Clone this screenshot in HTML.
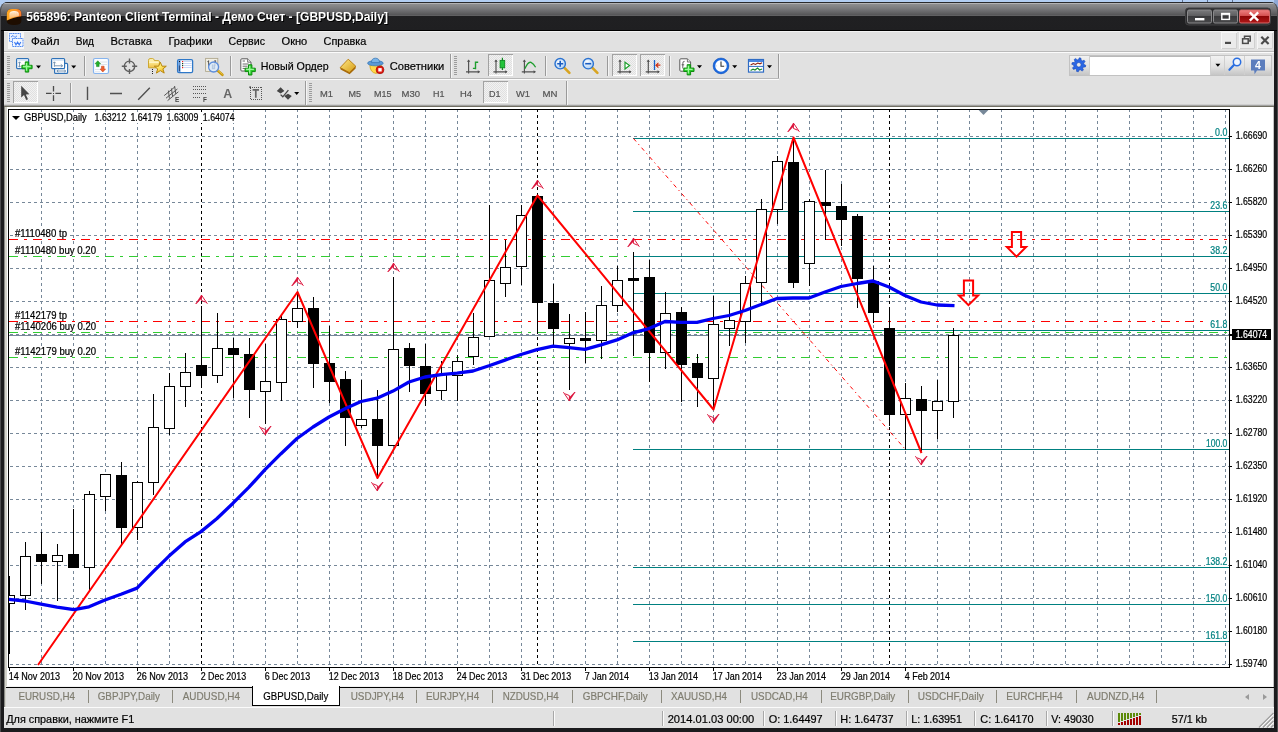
<!DOCTYPE html><html lang="ru"><head><meta charset="utf-8"><title>565896: Panteon Client Terminal</title>
<style>
html,body{margin:0;padding:0}
body{width:1278px;height:732px;overflow:hidden;position:relative;background:#b2cdf2;font-family:"Liberation Sans",sans-serif;font-size:11px;color:#000}
div{position:absolute;box-sizing:border-box}
#win{left:0;top:2px;width:1278px;height:730px;background:#1b1b1d;border-radius:8px 8px 0 0;overflow:hidden;border-left:1px solid #4c4c4e;border-right:1px solid #4c4c4e}
#title{left:-1px;top:0;width:1278px;height:29px;background:linear-gradient(#2a2a2c 0px,#2a2a2c 1px,#b2b2b4 1px,#b2b2b4 2px,#8e8e90 2px,#77777a 7px,#58585a 12.5px,#646466 13px,#5c5c5e 14px,#202022 14px,#1f1f21 28px,#000 28px,#000 29px)}
#client{left:4px;top:31px;width:1270px;height:697px;background:#e1e1e1}
.hl{left:0;width:1270px;height:1px}
svg{will-change:transform}
</style></head><body>
<div style="left:1182px;top:0;width:1px;height:3px;background:#5f6f8c"></div>
<div style="left:1207px;top:0;width:1px;height:3px;background:#5f6f8c"></div>
<div style="left:1232px;top:0;width:1px;height:3px;background:#5f6f8c"></div>
<div style="left:1274px;top:0;width:4px;height:8px;background:#8fa9d6"></div>
<div id="win"><div id="title"></div></div>
<div id="client">
<div class="hl" style="top:0px;background:#f3f3f3"></div>
<div class="hl" style="top:20px;background:#b9b9b9"></div>
<div class="hl" style="top:21px;background:#fbfbfb"></div>
<div style="left:0;top:47px;width:775px;height:1px;background:#b9b9b9"></div><div style="left:0;top:48px;width:775px;height:1px;background:#fbfbfb"></div>
<div class="hl" style="top:73px;background:#cfcfcf"></div>
<div class="hl" style="top:74px;background:#a2a2a0"></div>
<div class="hl" style="top:75px;background:#706e62"></div>
<div style="left:0;top:76px;width:1270px;height:580px;background:#fff"></div>
<div style="left:0;top:76px;width:1px;height:600px;background:#8a8a86"></div><div style="left:1px;top:76px;width:2px;height:600px;background:#d2d2ca"></div>
<div style="left:1269px;top:76px;width:1px;height:600px;background:#c4c4c4"></div>
<div style="left:2px;top:655px;width:1266px;height:1px;background:#f2f2f2"></div><div style="left:2px;top:656px;width:1268px;height:1px;background:#000"></div>
<div style="left:2px;top:657px;width:1266px;height:19px;background:#e1e1e1"></div>
<div style="left:84px;top:659px;width:1px;height:13px;background:#8c8a7e"></div>
<div style="left:168px;top:659px;width:1px;height:13px;background:#8c8a7e"></div>
<div style="left:412px;top:659px;width:1px;height:13px;background:#8c8a7e"></div>
<div style="left:488px;top:659px;width:1px;height:13px;background:#8c8a7e"></div>
<div style="left:568px;top:659px;width:1px;height:13px;background:#8c8a7e"></div>
<div style="left:657px;top:659px;width:1px;height:13px;background:#8c8a7e"></div>
<div style="left:736px;top:659px;width:1px;height:13px;background:#8c8a7e"></div>
<div style="left:817px;top:659px;width:1px;height:13px;background:#8c8a7e"></div>
<div style="left:904px;top:659px;width:1px;height:13px;background:#8c8a7e"></div>
<div style="left:992px;top:659px;width:1px;height:13px;background:#8c8a7e"></div>
<div style="left:1072px;top:659px;width:1px;height:13px;background:#8c8a7e"></div>
<div style="left:1152px;top:659px;width:1px;height:13px;background:#8c8a7e"></div>
<div style="left:248px;top:655px;width:88px;height:20px;background:#fff;border:1px solid #000;border-top:none"></div>
<div style="left:1241px;top:663px;width:0;height:0;border:3.5px solid transparent;border-right:4px solid #9a9a9a;border-left:none"></div>
<div style="left:1259px;top:663px;width:0;height:0;border:3.5px solid transparent;border-left:4px solid #9a9a9a;border-right:none"></div>
<div class="hl" style="top:676px;background:#fbfbfb"></div>
<div style="left:549px;top:680px;width:2px;height:15px;background:#a8a8a8;border-right:1px solid #fbfbfb"></div>
<div style="left:658px;top:680px;width:2px;height:15px;background:#a8a8a8;border-right:1px solid #fbfbfb"></div>
<div style="left:759px;top:680px;width:2px;height:15px;background:#a8a8a8;border-right:1px solid #fbfbfb"></div>
<div style="left:831px;top:680px;width:2px;height:15px;background:#a8a8a8;border-right:1px solid #fbfbfb"></div>
<div style="left:902px;top:680px;width:2px;height:15px;background:#a8a8a8;border-right:1px solid #fbfbfb"></div>
<div style="left:970px;top:680px;width:2px;height:15px;background:#a8a8a8;border-right:1px solid #fbfbfb"></div>
<div style="left:1042px;top:680px;width:2px;height:15px;background:#a8a8a8;border-right:1px solid #fbfbfb"></div>
<div style="left:1108px;top:680px;width:2px;height:15px;background:#a8a8a8;border-right:1px solid #fbfbfb"></div>
</div>
<svg class="chart" width="1278" height="732" viewBox="0 0 1278 732" style="position:absolute;left:0;top:0" shape-rendering="crispEdges" text-rendering="optimizeLegibility">
<defs><clipPath id="cp"><rect x="9" y="110" width="1220" height="557"/></clipPath></defs>
<g clip-path="url(#cp)">
<path d="M41.5 109V667M73.5 109V667M105.5 109V667M137.5 109V667M169.5 109V667M201.5 109V667M233.5 109V667M265.5 109V667M297.5 109V667M329.5 109V667M361.5 109V667M393.5 109V667M425.5 109V667M457.5 109V667M489.5 109V667M521.5 109V667M553.5 109V667M585.5 109V667M617.5 109V667M649.5 109V667M681.5 109V667M713.5 109V667M745.5 109V667M777.5 109V667M809.5 109V667M841.5 109V667M873.5 109V667M905.5 109V667M937.5 109V667M969.5 109V667M1001.5 109V667M1033.5 109V667M1065.5 109V667M1097.5 109V667M1129.5 109V667M1161.5 109V667M1193.5 109V667M1225.5 109V667" stroke="#778899" stroke-width="1" stroke-dasharray="3 3" fill="none"/>
<path d="M4 136.5H1229M4 169.5H1229M4 202.5H1229M4 235.5H1229M4 268.5H1229M4 301.5H1229M4 334.5H1229M4 367.5H1229M4 400.5H1229M4 433.5H1229M4 466.5H1229M4 499.5H1229M4 532.5H1229M4 565.5H1229M4 598.5H1229M4 631.5H1229M4 664.5H1229" stroke="#778899" stroke-width="1" stroke-dasharray="3 3" fill="none"/>
<path d="M201.5 109V667" stroke="#000" stroke-width="1" stroke-dasharray="3 3" fill="none"/>
<path d="M537.5 109V667" stroke="#000" stroke-width="1" stroke-dasharray="3 3" fill="none"/>
<path d="M889.5 109V667" stroke="#000" stroke-width="1" stroke-dasharray="3 3" fill="none"/>
<path d="M9 239.5H1229" stroke="#ff0000" stroke-width="1" stroke-dasharray="9 6 3 6" fill="none"/>
<path d="M9 256.5H1229" stroke="#32cd32" stroke-width="1" stroke-dasharray="9 6 3 6" fill="none"/>
<path d="M9 321.5H1229" stroke="#ff0000" stroke-width="1" stroke-dasharray="9 6 3 6" fill="none"/>
<path d="M9 332.5H1229" stroke="#32cd32" stroke-width="1" stroke-dasharray="9 6 3 6" fill="none"/>
<path d="M9 357.5H1229" stroke="#32cd32" stroke-width="1" stroke-dasharray="9 6 3 6" fill="none"/>
<path d="M9 335.5H1229" stroke="#778899" stroke-width="1" fill="none"/>
<path d="M633 138.5H1229" stroke="#008080" stroke-width="1" fill="none"/>
<path d="M633 211.5H1229" stroke="#008080" stroke-width="1" fill="none"/>
<path d="M633 256.5H1229" stroke="#008080" stroke-width="1" fill="none"/>
<path d="M633 293.5H1229" stroke="#008080" stroke-width="1" fill="none"/>
<path d="M633 330.5H1229" stroke="#008080" stroke-width="1" fill="none"/>
<path d="M633 449.5H1229" stroke="#008080" stroke-width="1" fill="none"/>
<path d="M633 567.5H1229" stroke="#008080" stroke-width="1" fill="none"/>
<path d="M633 604.5H1229" stroke="#008080" stroke-width="1" fill="none"/>
<path d="M633 641.5H1229" stroke="#008080" stroke-width="1" fill="none"/>
<path d="M633.5 138.5L905.5 449.5" stroke="#ff0000" stroke-width="1" stroke-dasharray="4 3.5 1.2 3.5" fill="none" shape-rendering="auto"/>
<path d="M9.5 576V654M25.5 542V610M41.5 532V584M57.5 544V601M73.5 509V568M89.5 491V590M105.5 474V511M121.5 462V544M137.5 481V540M153.5 394V495M169.5 373V435M185.5 353V407M201.5 306V388M217.5 313V383M233.5 338V398M249.5 338V418M265.5 344V424M281.5 315V401M297.5 292V328M313.5 297V388M329.5 326V403M345.5 371V446M361.5 380V428M377.5 390V478M393.5 277V446M409.5 343V392M425.5 344V406M441.5 361V400M457.5 355V401M473.5 313V365M489.5 205V337M505.5 240V297M521.5 205V285M537.5 195V334M553.5 284V347M569.5 314V390M585.5 312V363M601.5 286V359M617.5 266V312M633.5 252V356M649.5 260V382M665.5 292V369M681.5 307V402M697.5 354V407M713.5 296V410M729.5 301V346M745.5 276V343M761.5 199V303M777.5 156V224M793.5 137V288M809.5 199V286M825.5 170V240M841.5 184V246M857.5 214V308M873.5 266V323M889.5 307V426M905.5 383V450M921.5 386V451M937.5 380V439M953.5 328V418" stroke="#000" stroke-width="1" fill="none"/>
<rect x="4.5" y="595.5" width="10" height="8" fill="#fff" stroke="#000" stroke-width="1"/>
<rect x="20.5" y="556.5" width="10" height="39" fill="#fff" stroke="#000" stroke-width="1"/>
<rect x="36" y="554" width="11" height="8" fill="#000"/>
<rect x="52.5" y="555.5" width="10" height="6" fill="#fff" stroke="#000" stroke-width="1"/>
<rect x="68" y="554" width="11" height="14" fill="#000"/>
<rect x="84.5" y="494.5" width="10" height="73" fill="#fff" stroke="#000" stroke-width="1"/>
<rect x="100.5" y="474.5" width="10" height="22" fill="#fff" stroke="#000" stroke-width="1"/>
<rect x="116" y="475" width="11" height="53" fill="#000"/>
<rect x="132.5" y="482.5" width="10" height="45" fill="#fff" stroke="#000" stroke-width="1"/>
<rect x="148.5" y="427.5" width="10" height="55" fill="#fff" stroke="#000" stroke-width="1"/>
<rect x="164.5" y="386.5" width="10" height="42" fill="#fff" stroke="#000" stroke-width="1"/>
<rect x="180.5" y="372.5" width="10" height="14" fill="#fff" stroke="#000" stroke-width="1"/>
<rect x="196" y="365" width="11" height="11" fill="#000"/>
<rect x="212.5" y="348.5" width="10" height="27" fill="#fff" stroke="#000" stroke-width="1"/>
<rect x="228" y="348" width="11" height="7" fill="#000"/>
<rect x="244" y="354" width="11" height="36" fill="#000"/>
<rect x="260.5" y="381.5" width="10" height="10" fill="#fff" stroke="#000" stroke-width="1"/>
<rect x="276.5" y="319.5" width="10" height="63" fill="#fff" stroke="#000" stroke-width="1"/>
<rect x="292.5" y="308.5" width="10" height="13" fill="#fff" stroke="#000" stroke-width="1"/>
<rect x="308" y="308" width="11" height="56" fill="#000"/>
<rect x="324" y="363" width="11" height="19" fill="#000"/>
<rect x="340" y="379" width="11" height="39" fill="#000"/>
<rect x="356.5" y="419.5" width="10" height="6" fill="#fff" stroke="#000" stroke-width="1"/>
<rect x="372" y="419" width="11" height="27" fill="#000"/>
<rect x="388.5" y="349.5" width="10" height="96" fill="#fff" stroke="#000" stroke-width="1"/>
<rect x="404" y="348" width="11" height="18" fill="#000"/>
<rect x="420" y="366" width="11" height="28" fill="#000"/>
<rect x="436.5" y="374.5" width="10" height="16" fill="#fff" stroke="#000" stroke-width="1"/>
<rect x="452.5" y="361.5" width="10" height="14" fill="#fff" stroke="#000" stroke-width="1"/>
<rect x="468.5" y="337.5" width="10" height="19" fill="#fff" stroke="#000" stroke-width="1"/>
<rect x="484.5" y="280.5" width="10" height="56" fill="#fff" stroke="#000" stroke-width="1"/>
<rect x="500.5" y="267.5" width="10" height="16" fill="#fff" stroke="#000" stroke-width="1"/>
<rect x="516.5" y="215.5" width="10" height="51" fill="#fff" stroke="#000" stroke-width="1"/>
<rect x="532" y="196" width="11" height="107" fill="#000"/>
<rect x="548" y="303" width="11" height="26" fill="#000"/>
<rect x="564.5" y="338.5" width="10" height="5" fill="#fff" stroke="#000" stroke-width="1"/>
<rect x="580" y="338" width="11" height="3" fill="#000"/>
<rect x="596.5" y="305.5" width="10" height="35" fill="#fff" stroke="#000" stroke-width="1"/>
<rect x="612.5" y="280.5" width="10" height="25" fill="#fff" stroke="#000" stroke-width="1"/>
<rect x="628" y="278" width="11" height="3" fill="#000"/>
<rect x="644" y="277" width="11" height="76" fill="#000"/>
<rect x="660.5" y="313.5" width="10" height="39" fill="#fff" stroke="#000" stroke-width="1"/>
<rect x="676" y="312" width="11" height="53" fill="#000"/>
<rect x="692" y="363" width="11" height="15" fill="#000"/>
<rect x="708.5" y="324.5" width="10" height="54" fill="#fff" stroke="#000" stroke-width="1"/>
<rect x="724.5" y="320.5" width="10" height="8" fill="#fff" stroke="#000" stroke-width="1"/>
<rect x="740.5" y="283.5" width="10" height="38" fill="#fff" stroke="#000" stroke-width="1"/>
<rect x="756.5" y="209.5" width="10" height="73" fill="#fff" stroke="#000" stroke-width="1"/>
<rect x="772.5" y="161.5" width="10" height="48" fill="#fff" stroke="#000" stroke-width="1"/>
<rect x="788" y="162" width="11" height="121" fill="#000"/>
<rect x="804.5" y="201.5" width="10" height="62" fill="#fff" stroke="#000" stroke-width="1"/>
<rect x="820" y="202" width="11" height="4" fill="#000"/>
<rect x="836" y="206" width="11" height="14" fill="#000"/>
<rect x="852" y="216" width="11" height="63" fill="#000"/>
<rect x="868" y="281" width="11" height="32" fill="#000"/>
<rect x="884" y="328" width="11" height="87" fill="#000"/>
<rect x="900.5" y="398.5" width="10" height="16" fill="#fff" stroke="#000" stroke-width="1"/>
<rect x="916" y="399" width="11" height="12" fill="#000"/>
<rect x="932.5" y="401.5" width="10" height="9" fill="#fff" stroke="#000" stroke-width="1"/>
<rect x="948.5" y="335.5" width="10" height="66" fill="#fff" stroke="#000" stroke-width="1"/>
<polyline points="38,665 297.5,292 377.5,478 537.5,195.5 713.5,409.5 793.5,137.5 921.5,453" stroke="#ff0000" stroke-width="2" fill="none" shape-rendering="auto" stroke-linejoin="round"/>
<polyline points="8,599.3 25,601 41,604.2 57,607.2 74,609.6 89,606.8 105,600 121,594.3 137,588.1 153,571.8 169,556.1 185,541.9 201,531.6 217,518.5 233,503.2 249,487.2 265,469.6 281,453.7 297,438.5 313,427 329,417 345,408.7 361,401.5 377,398.2 393,391.1 409,382 425,377 441,374.6 457,373.2 473,371 489,365.8 505,360.1 521,354.5 537,349.7 553,346.2 569,347.6 585,349.3 601,344.8 617,339.9 633,332.8 649,328.6 665,321.5 681,322.3 697,322.3 713,318.5 729,315.5 745,310.5 761,304.5 777,298.5 793,298 809,298 825,292 841,286.5 857,283.5 873,281 889,287 905,295.5 921,302 937,305 954.5,305.6" stroke="#0000f4" stroke-width="3.3" fill="none" shape-rendering="auto" stroke-linejoin="round"/>
<path d="M201.4 294.7L195.2 304L196.4 304L201.4 298.8Z" fill="#dc143c" shape-rendering="auto"/><path d="M201.4 295L207.4 303.8M201.4 300.4L205.6 302.2M201.4 295V300.4" stroke="#dc143c" stroke-width="1" fill="none" shape-rendering="auto"/>
<path d="M297.4 276.7L291.2 286L292.4 286L297.4 280.8Z" fill="#dc143c" shape-rendering="auto"/><path d="M297.4 277L303.4 285.8M297.4 282.4L301.6 284.2M297.4 277V282.4" stroke="#dc143c" stroke-width="1" fill="none" shape-rendering="auto"/>
<path d="M393.4 262.7L387.2 272L388.4 272L393.4 266.8Z" fill="#dc143c" shape-rendering="auto"/><path d="M393.4 263L399.4 271.8M393.4 268.4L397.6 270.2M393.4 263V268.4" stroke="#dc143c" stroke-width="1" fill="none" shape-rendering="auto"/>
<path d="M537.4 179.7L531.2 189L532.4 189L537.4 183.8Z" fill="#dc143c" shape-rendering="auto"/><path d="M537.4 180L543.4 188.8M537.4 185.4L541.6 187.2M537.4 180V185.4" stroke="#dc143c" stroke-width="1" fill="none" shape-rendering="auto"/>
<path d="M633.4 237.7L627.2 247L628.4 247L633.4 241.8Z" fill="#dc143c" shape-rendering="auto"/><path d="M633.4 238L639.4 246.8M633.4 243.4L637.6 245.2M633.4 238V243.4" stroke="#dc143c" stroke-width="1" fill="none" shape-rendering="auto"/>
<path d="M793.4 122.7L787.2 132L788.4 132L793.4 126.8Z" fill="#dc143c" shape-rendering="auto"/><path d="M793.4 123L799.4 131.8M793.4 128.4L797.6 130.2M793.4 123V128.4" stroke="#dc143c" stroke-width="1" fill="none" shape-rendering="auto"/>
<path d="M265.4 435.3L271.6 426L270.4 426L265.4 431.2Z" fill="#dc143c" shape-rendering="auto"/><path d="M265.4 435L259.4 426.2M265.4 429.6L261.2 427.8M265.4 435V429.6" stroke="#dc143c" stroke-width="1" fill="none" shape-rendering="auto"/>
<path d="M377.4 491.3L383.6 482L382.4 482L377.4 487.2Z" fill="#dc143c" shape-rendering="auto"/><path d="M377.4 491L371.4 482.2M377.4 485.6L373.2 483.8M377.4 491V485.6" stroke="#dc143c" stroke-width="1" fill="none" shape-rendering="auto"/>
<path d="M569.4 401.3L575.6 392L574.4 392L569.4 397.2Z" fill="#dc143c" shape-rendering="auto"/><path d="M569.4 401L563.4 392.2M569.4 395.6L565.2 393.8M569.4 401V395.6" stroke="#dc143c" stroke-width="1" fill="none" shape-rendering="auto"/>
<path d="M713.4 423.3L719.6 414L718.4 414L713.4 419.2Z" fill="#dc143c" shape-rendering="auto"/><path d="M713.4 423L707.4 414.2M713.4 417.6L709.2 415.8M713.4 423V417.6" stroke="#dc143c" stroke-width="1" fill="none" shape-rendering="auto"/>
<path d="M921.4 465.3L927.6 456L926.4 456L921.4 461.2Z" fill="#dc143c" shape-rendering="auto"/><path d="M921.4 465L915.4 456.2M921.4 459.6L917.2 457.8M921.4 465V459.6" stroke="#dc143c" stroke-width="1" fill="none" shape-rendering="auto"/>
<path d="M1011.9 232H1021.1V247H1026.1L1016.5 256.6L1006.9 247H1011.9Z" stroke="#ff0000" stroke-width="2" fill="none" shape-rendering="auto" stroke-linejoin="miter"/>
<path d="M963.9 280.5H973.1V295.5H978.1L968.5 305.1L958.9 295.5H963.9Z" stroke="#ff0000" stroke-width="2" fill="none" shape-rendering="auto" stroke-linejoin="miter"/>
</g>
<path d="M8.5 109V667.5H1230M8 109.5H1230M1229.5 109V668" stroke="#000" stroke-width="1" fill="none"/>
<path d="M978.6 110H988.4L983.5 115Z" fill="#778899" shape-rendering="auto"/>
<path d="M1230 136.5H1232M1230 169.5H1232M1230 202.5H1232M1230 235.5H1232M1230 268.5H1232M1230 301.5H1232M1230 334.5H1232M1230 367.5H1232M1230 400.5H1232M1230 433.5H1232M1230 466.5H1232M1230 499.5H1232M1230 532.5H1232M1230 565.5H1232M1230 598.5H1232M1230 631.5H1232M1230 664.5H1232M9.5 668V671M73.5 668V671M137.5 668V671M201.5 668V671M265.5 668V671M329.5 668V671M393.5 668V671M457.5 668V671M521.5 668V671M585.5 668V671M649.5 668V671M713.5 668V671M777.5 668V671M841.5 668V671M905.5 668V671" stroke="#000" stroke-width="1" fill="none"/>
<g font-family="'Liberation Sans', sans-serif" shape-rendering="auto" stroke-width=".22" paint-order="stroke">
<text x="1235.7" y="139" font-size="10" fill="#000" stroke="#000" textLength="31.5" lengthAdjust="spacingAndGlyphs">1.66690</text>
<text x="1235.7" y="172" font-size="10" fill="#000" stroke="#000" textLength="31.5" lengthAdjust="spacingAndGlyphs">1.66260</text>
<text x="1235.7" y="205" font-size="10" fill="#000" stroke="#000" textLength="31.5" lengthAdjust="spacingAndGlyphs">1.65820</text>
<text x="1235.7" y="238" font-size="10" fill="#000" stroke="#000" textLength="31.5" lengthAdjust="spacingAndGlyphs">1.65390</text>
<text x="1235.7" y="271" font-size="10" fill="#000" stroke="#000" textLength="31.5" lengthAdjust="spacingAndGlyphs">1.64950</text>
<text x="1235.7" y="304" font-size="10" fill="#000" stroke="#000" textLength="31.5" lengthAdjust="spacingAndGlyphs">1.64520</text>
<text x="1235.7" y="370" font-size="10" fill="#000" stroke="#000" textLength="31.5" lengthAdjust="spacingAndGlyphs">1.63650</text>
<text x="1235.7" y="403" font-size="10" fill="#000" stroke="#000" textLength="31.5" lengthAdjust="spacingAndGlyphs">1.63220</text>
<text x="1235.7" y="436" font-size="10" fill="#000" stroke="#000" textLength="31.5" lengthAdjust="spacingAndGlyphs">1.62780</text>
<text x="1235.7" y="469" font-size="10" fill="#000" stroke="#000" textLength="31.5" lengthAdjust="spacingAndGlyphs">1.62350</text>
<text x="1235.7" y="502" font-size="10" fill="#000" stroke="#000" textLength="31.5" lengthAdjust="spacingAndGlyphs">1.61920</text>
<text x="1235.7" y="535" font-size="10" fill="#000" stroke="#000" textLength="31.5" lengthAdjust="spacingAndGlyphs">1.61480</text>
<text x="1235.7" y="568" font-size="10" fill="#000" stroke="#000" textLength="31.5" lengthAdjust="spacingAndGlyphs">1.61040</text>
<text x="1235.7" y="601" font-size="10" fill="#000" stroke="#000" textLength="31.5" lengthAdjust="spacingAndGlyphs">1.60610</text>
<text x="1235.7" y="634" font-size="10" fill="#000" stroke="#000" textLength="31.5" lengthAdjust="spacingAndGlyphs">1.60180</text>
<text x="1235.7" y="667" font-size="10" fill="#000" stroke="#000" textLength="31.5" lengthAdjust="spacingAndGlyphs">1.59740</text>
<text x="8.7" y="680.1" font-size="10" fill="#000" stroke="#000" textLength="51.4" lengthAdjust="spacingAndGlyphs">14 Nov 2013</text>
<text x="72.7" y="680.1" font-size="10" fill="#000" stroke="#000" textLength="51.4" lengthAdjust="spacingAndGlyphs">20 Nov 2013</text>
<text x="136.7" y="680.1" font-size="10" fill="#000" stroke="#000" textLength="51.4" lengthAdjust="spacingAndGlyphs">26 Nov 2013</text>
<text x="200.7" y="680.1" font-size="10" fill="#000" stroke="#000" textLength="45.4" lengthAdjust="spacingAndGlyphs">2 Dec 2013</text>
<text x="264.7" y="680.1" font-size="10" fill="#000" stroke="#000" textLength="45.4" lengthAdjust="spacingAndGlyphs">6 Dec 2013</text>
<text x="328.7" y="680.1" font-size="10" fill="#000" stroke="#000" textLength="50.4" lengthAdjust="spacingAndGlyphs">12 Dec 2013</text>
<text x="392.7" y="680.1" font-size="10" fill="#000" stroke="#000" textLength="50.4" lengthAdjust="spacingAndGlyphs">18 Dec 2013</text>
<text x="456.7" y="680.1" font-size="10" fill="#000" stroke="#000" textLength="50.4" lengthAdjust="spacingAndGlyphs">24 Dec 2013</text>
<text x="520.7" y="680.1" font-size="10" fill="#000" stroke="#000" textLength="50.4" lengthAdjust="spacingAndGlyphs">31 Dec 2013</text>
<text x="584.7" y="680.1" font-size="10" fill="#000" stroke="#000" textLength="44.4" lengthAdjust="spacingAndGlyphs">7 Jan 2014</text>
<text x="648.7" y="680.1" font-size="10" fill="#000" stroke="#000" textLength="49.4" lengthAdjust="spacingAndGlyphs">13 Jan 2014</text>
<text x="712.7" y="680.1" font-size="10" fill="#000" stroke="#000" textLength="49.4" lengthAdjust="spacingAndGlyphs">17 Jan 2014</text>
<text x="776.7" y="680.1" font-size="10" fill="#000" stroke="#000" textLength="49.4" lengthAdjust="spacingAndGlyphs">23 Jan 2014</text>
<text x="840.7" y="680.1" font-size="10" fill="#000" stroke="#000" textLength="49.4" lengthAdjust="spacingAndGlyphs">29 Jan 2014</text>
<text x="904.7" y="680.1" font-size="10" fill="#000" stroke="#000" textLength="45.4" lengthAdjust="spacingAndGlyphs">4 Feb 2014</text>
<rect x="1232" y="329" width="39" height="11" fill="#000" shape-rendering="crispEdges"/><rect x="1230" y="335" width="2" height="1" fill="#000" shape-rendering="crispEdges"/>
<text x="1235.7" y="338" font-size="10" fill="#fff" stroke="#fff" textLength="31.5" lengthAdjust="spacingAndGlyphs">1.64074</text>
<rect x="10" y="113" width="226" height="10" fill="#fff"/>
<text x="24" y="121" font-size="10" fill="#000" stroke="#000" textLength="62.8" lengthAdjust="spacingAndGlyphs">GBPUSD,Daily</text>
<text x="94.6" y="121" font-size="10" fill="#000" stroke="#000" textLength="31.8" lengthAdjust="spacingAndGlyphs">1.63212</text>
<text x="130.4" y="121" font-size="10" fill="#000" stroke="#000" textLength="31.8" lengthAdjust="spacingAndGlyphs">1.64179</text>
<text x="166.6" y="121" font-size="10" fill="#000" stroke="#000" textLength="31.8" lengthAdjust="spacingAndGlyphs">1.63009</text>
<text x="202.8" y="121" font-size="10" fill="#000" stroke="#000" textLength="31.8" lengthAdjust="spacingAndGlyphs">1.64074</text>
<path d="M12 116H20L16 120Z" fill="#000"/>
<rect x="14" y="229" width="55" height="10" fill="#fff" shape-rendering="crispEdges"/>
<text x="15" y="237" font-size="10" fill="#000" stroke="#000" textLength="52" lengthAdjust="spacingAndGlyphs">#1110480 tp</text>
<rect x="14" y="246" width="84" height="10" fill="#fff" shape-rendering="crispEdges"/>
<text x="15" y="254" font-size="10" fill="#000" stroke="#000" textLength="81" lengthAdjust="spacingAndGlyphs">#1110480 buy 0.20</text>
<rect x="14" y="311" width="55" height="10" fill="#fff" shape-rendering="crispEdges"/>
<text x="15" y="319" font-size="10" fill="#000" stroke="#000" textLength="52" lengthAdjust="spacingAndGlyphs">#1142179 tp</text>
<rect x="14" y="322" width="84" height="10" fill="#fff" shape-rendering="crispEdges"/>
<text x="15" y="330" font-size="10" fill="#000" stroke="#000" textLength="81" lengthAdjust="spacingAndGlyphs">#1140206 buy 0.20</text>
<rect x="14" y="347" width="84" height="10" fill="#fff" shape-rendering="crispEdges"/>
<text x="15" y="355" font-size="10" fill="#000" stroke="#000" textLength="81" lengthAdjust="spacingAndGlyphs">#1142179 buy 0.20</text>
<rect x="1214.0" y="128" width="14.3" height="10" fill="#fff" shape-rendering="crispEdges"/>
<text x="1215.0" y="136" font-size="10" fill="#008080" stroke="#008080" textLength="12.3" lengthAdjust="spacingAndGlyphs">0.0</text>
<rect x="1209.3" y="201" width="19.0" height="10" fill="#fff" shape-rendering="crispEdges"/>
<text x="1210.3" y="209" font-size="10" fill="#008080" stroke="#008080" textLength="17.0" lengthAdjust="spacingAndGlyphs">23.6</text>
<rect x="1209.3" y="246" width="19.0" height="10" fill="#fff" shape-rendering="crispEdges"/>
<text x="1210.3" y="254" font-size="10" fill="#008080" stroke="#008080" textLength="17.0" lengthAdjust="spacingAndGlyphs">38.2</text>
<rect x="1209.3" y="283" width="19.0" height="10" fill="#fff" shape-rendering="crispEdges"/>
<text x="1210.3" y="291" font-size="10" fill="#008080" stroke="#008080" textLength="17.0" lengthAdjust="spacingAndGlyphs">50.0</text>
<rect x="1209.3" y="320" width="19.0" height="10" fill="#fff" shape-rendering="crispEdges"/>
<text x="1210.3" y="328" font-size="10" fill="#008080" stroke="#008080" textLength="17.0" lengthAdjust="spacingAndGlyphs">61.8</text>
<rect x="1204.9" y="439" width="23.4" height="10" fill="#fff" shape-rendering="crispEdges"/>
<text x="1205.8999999999999" y="447" font-size="10" fill="#008080" stroke="#008080" textLength="21.4" lengthAdjust="spacingAndGlyphs">100.0</text>
<rect x="1204.7" y="557" width="23.6" height="10" fill="#fff" shape-rendering="crispEdges"/>
<text x="1205.7" y="565" font-size="10" fill="#008080" stroke="#008080" textLength="21.6" lengthAdjust="spacingAndGlyphs">138.2</text>
<rect x="1204.7" y="594" width="23.6" height="10" fill="#fff" shape-rendering="crispEdges"/>
<text x="1205.7" y="602" font-size="10" fill="#008080" stroke="#008080" textLength="21.6" lengthAdjust="spacingAndGlyphs">150.0</text>
<rect x="1204.7" y="631" width="23.6" height="10" fill="#fff" shape-rendering="crispEdges"/>
<text x="1205.7" y="639" font-size="10" fill="#008080" stroke="#008080" textLength="21.6" lengthAdjust="spacingAndGlyphs">161.8</text>
</g>
</svg>
<svg width="1278" height="732" viewBox="0 0 1278 732" style="position:absolute;left:0;top:0;will-change:transform">
<defs><pattern id="hat" width="2" height="2" patternUnits="userSpaceOnUse"><rect width="2" height="2" fill="#f2f2f2"/><rect width="1" height="1" fill="#e0e0e0"/><rect x="1" y="1" width="1" height="1" fill="#e0e0e0"/></pattern><linearGradient id="gb" x1="0" y1="0" x2="0" y2="1"><stop offset="0" stop-color="#7a7a7c"/><stop offset=".5" stop-color="#5a5a5c"/><stop offset=".5" stop-color="#3a3a3c"/><stop offset="1" stop-color="#48484a"/></linearGradient><linearGradient id="gr" x1="0" y1="0" x2="0" y2="1"><stop offset="0" stop-color="#f08080"/><stop offset=".5" stop-color="#d04a4a"/><stop offset=".5" stop-color="#8e0606"/><stop offset="1" stop-color="#b01818"/></linearGradient><linearGradient id="gs" x1="0" y1="0" x2="0" y2="1"><stop offset="0" stop-color="#f2f2f2"/><stop offset=".55" stop-color="#e2e2e2"/><stop offset="1" stop-color="#c4c4c4"/></linearGradient><linearGradient id="go" x1="0" y1="0" x2="1" y2="0"><stop offset="0" stop-color="#ffa820"/><stop offset=".6" stop-color="#ff9a28"/><stop offset="1" stop-color="#f87830"/></linearGradient><linearGradient id="gy" x1="0" y1="0" x2="1" y2="1"><stop offset="0" stop-color="#ffe98a"/><stop offset="1" stop-color="#d49a10"/></linearGradient><radialGradient id="gl" cx=".4" cy=".35" r=".7"><stop offset="0" stop-color="#ffffff"/><stop offset="1" stop-color="#a8cdf4"/></radialGradient><linearGradient id="gw" x1="0" y1="0" x2="0" y2="1"><stop offset="0" stop-color="#ffffff" stop-opacity=".95"/><stop offset="1" stop-color="#ffd0a0" stop-opacity=".55"/></linearGradient><linearGradient id="gf" x1="0" y1="0" x2="0" y2="1"><stop offset="0" stop-color="#fff6c4"/><stop offset=".45" stop-color="#fbe68a"/><stop offset="1" stop-color="#eebf48"/></linearGradient><linearGradient id="gst" x1="0" y1="0" x2=".6" y2="1"><stop offset="0" stop-color="#fffbc0"/><stop offset=".55" stop-color="#ffe668"/><stop offset="1" stop-color="#eeb828"/></linearGradient></defs>
<path d="M6.8 14Q6.8 9 12 9H16.4Q21.4 9 21.4 14V21Q21.4 25 14 25Q6.8 25 6.8 21Z" fill="#1e0d00"/>
<path d="M6.8 20.6V14Q6.8 9 12 9H16.4Q21.4 9 21.4 14V16.2Q12.5 17.4 6.8 20.6Z" fill="url(#go)"/>
<path d="M9.4 18.4V13.8Q9.4 10.9 14 10.9Q18.9 10.9 18.9 13.8V16Q13.4 16.6 9.4 18.4Z" fill="url(#gw)"/>
<path d="M11.2 17.5V13M13 16.9V12.4M14.8 16.6V12.3M16.6 16.3V12.5" stroke="#ffc890" stroke-width=".7" opacity=".7"/>
<rect x="1185.5" y="8" width="85" height="17" rx="3" fill="#2c2c2e" stroke="#404042" stroke-width="1"/>
<rect x="1187.5" y="10" width="24" height="13" rx="1.5" fill="url(#gb)" stroke="#8a8a8c" stroke-width="1"/>
<rect x="1213.5" y="10" width="24" height="13" rx="1.5" fill="url(#gb)" stroke="#8a8a8c" stroke-width="1"/>
<rect x="1239.5" y="10" width="30" height="13" rx="1.5" fill="url(#gr)" stroke="#d46a6a" stroke-width="1"/>
<rect x="1195" y="18" width="9.4" height="2.4" fill="#fff"/>
<rect x="1221.8" y="14" width="7.6" height="5.4" fill="none" stroke="#fff" stroke-width="1.4"/><rect x="1221.1" y="12.8" width="9" height="1.8" fill="#fff"/>
<path d="M1249.8 12.4L1258.2 20.6M1258.2 12.4L1249.8 20.6" stroke="#fff" stroke-width="2.3"/>
<rect x="8" y="32" width="16" height="17" fill="#f6f6f6"/>
<rect x="9.5" y="33.5" width="11" height="8" fill="#eaf1ff" stroke="#4a86f0" stroke-width="1" stroke-dasharray="1.2 .5"/>
<rect x="12.5" y="38.5" width="10.5" height="8" fill="#f4f8ff" stroke="#4a86f0" stroke-width="1" stroke-dasharray="1.2 .5"/>
<path d="M11 37L13 35.5L15 37.5L17 35.8" stroke="#4a86f0" stroke-width="1" fill="none"/>
<path d="M14.5 42L16 44.8L17.6 42L19.2 44.8L20.8 42" stroke="#3a78f0" stroke-width="1.1" fill="none"/>
<rect x="1221.5" y="32.5" width="15" height="16" fill="#ebebeb" stroke="#f6f6f6" stroke-width="1"/><path d="M1236.5 33V48.5H1222" stroke="#cfcfcf" stroke-width="1" fill="none"/>
<rect x="1239.5" y="32.5" width="15" height="16" fill="#ebebeb" stroke="#f6f6f6" stroke-width="1"/><path d="M1254.5 33V48.5H1240" stroke="#cfcfcf" stroke-width="1" fill="none"/>
<rect x="1257.5" y="32.5" width="15" height="16" fill="#ebebeb" stroke="#f6f6f6" stroke-width="1"/><path d="M1272.5 33V48.5H1258" stroke="#cfcfcf" stroke-width="1" fill="none"/>
<rect x="1225" y="41.8" width="6" height="2.2" fill="#4a4a4a"/>
<path d="M1244.5 38V36.2H1250.2V41H1248.6" stroke="#4a4a4a" stroke-width="1.5" fill="none"/><rect x="1242.6" y="38.8" width="5.6" height="4.6" fill="none" stroke="#4a4a4a" stroke-width="1.5"/>
<path d="M1261.3 36.8L1268.6 44M1268.6 36.8L1261.3 44" stroke="#4a4a4a" stroke-width="2.2"/>
<path d="M7 56.5h3M7 58.5h3M7 60.5h3M7 62.5h3M7 64.5h3M7 66.5h3M7 68.5h3M7 70.5h3M7 72.5h3M7 74.5h3" stroke="#9c9c9c" stroke-width="1" shape-rendering="crispEdges"/>
<rect x="16.6" y="58.6" width="12" height="10" rx="1" fill="#fff" stroke="#2f72b8" stroke-width="1.2"/><rect x="17.2" y="59.2" width="10.8" height="1.6" fill="#cfe1f5"/>
<path d="M19.5 62V67M18.3 63.2L19.5 61.8L20.7 63.2M18.3 65.8L19.5 67.2L20.7 65.8" stroke="#6d8cab" stroke-width=".9" fill="none"/>
<path d="M25.3 61.9H28.7V65.3H32.1V68.7H28.7V72.1H25.3V68.7H21.9V65.3H25.3Z" fill="#2ccc2c" stroke="#0e8c0e" stroke-width="1" stroke-linejoin="round"/><path d="M26.5 62.9V70.69999999999999M22.9 66.5H30.700000000000003" stroke="#9cf89c" stroke-width="1.3"/>
<path d="M36 65.4H41L38.5 68.4Z" fill="#000"/>
<rect x="54.6" y="63.4" width="13" height="10" rx="1" fill="#fff" stroke="#2f72b8" stroke-width="1.2"/>
<rect x="51.6" y="58.6" width="13" height="10" rx="1" fill="#fff" stroke="#2f72b8" stroke-width="1.2"/><rect x="52.2" y="59.2" width="11.8" height="1.6" fill="#cfe1f5"/>
<path d="M54.4 62V66.8M54.4 65.8H62.5M60.8 64.4L62.7 65.8L60.8 67.2M53.2 63.2L54.4 61.8L55.6 63.2M57 71H65.6M58.4 69.8L56.8 71L58.4 72.2M64.2 69.8L65.8 71L64.2 72.2" stroke="#6d8cab" stroke-width=".9" fill="none"/>
<path d="M71.2 65.4H76.2L73.7 68.4Z" fill="#000"/>
<path d="M84.5 56V76" stroke="#9a9a9a" stroke-width="1" shape-rendering="crispEdges"/><path d="M85.5 56V76" stroke="#f4f4f4" stroke-width="1" shape-rendering="crispEdges"/>
<rect x="93.5" y="58.5" width="15" height="15" rx="1.5" fill="#fbfdff" stroke="#86b4ee" stroke-width="1.2"/>
<path d="M100 62H107M100 64.5H107M95 69.5H100M95 71.8H100" stroke="#d8dde6" stroke-width=".8"/>
<path d="M97.8 60.8L100.6 63.8H99.1V66.6H96.5V63.8H95Z" fill="#22b02a" stroke="#11801a" stroke-width=".5"/>
<path d="M102.8 72L100 69H101.5V66.2H104.1V69H105.6Z" fill="#f06030" stroke="#c23a10" stroke-width=".5"/>
<circle cx="129.5" cy="66.3" r="5.2" fill="none" stroke="#5e5e5e" stroke-width="1.4"/><path d="M129.5 58.6V63.6M129.5 69V74M121.8 66.3H126.8M132.2 66.3H137.2" stroke="#5e5e5e" stroke-width="1.4"/>
<path d="M148.5 60.4Q148.5 58.6 150 58.6H152.8Q153.8 58.6 154.2 60L154.4 60.6H158.2Q159.4 60.6 159.4 62V67.8H148.5Z" fill="url(#gf)" stroke="#c8a224" stroke-width=".9"/>
<path d="M149.2 62.2H158.8" stroke="#fffbe0" stroke-width="1"/>
<rect x="152" y="69" width="1" height="1" fill="#222"/><rect x="152" y="71" width="1" height="1" fill="#222"/><rect x="152" y="73" width="1" height="1" fill="#222"/>
<path d="M160.3 62.2L162 66.2H166.3L162.9 68.9L164.2 73.1L160.3 70.6L156.4 73.1L157.7 68.9L154.3 66.2H158.6Z" fill="url(#gst)" stroke="#b8860b" stroke-width="1" stroke-linejoin="round"/>
<rect x="177.6" y="59.6" width="15" height="13" rx="1.4" fill="#fff" stroke="#2f78c8" stroke-width="1.3"/><rect x="178.3" y="60.3" width="2.2" height="11.6" fill="#5a92d8"/><rect x="178.9" y="65.5" width="1" height="5.6" fill="#2a4a7a"/><rect x="179" y="61" width="1" height="1" fill="#111"/>
<path d="M183.6 61.5H191.6M183.6 63.5H191.6M183.6 65.5H191.6M183.6 67.5H191.6" stroke="#c4d4f6" stroke-width=".9"/>
<rect x="182" y="61" width="1.2" height="1.2" fill="#f02020"/><rect x="182" y="63" width="1.2" height="1.2" fill="#204020"/><rect x="182" y="65" width="1.2" height="1.2" fill="#204020"/><rect x="182" y="67" width="1.2" height="1.2" fill="#f02020"/>
<rect x="205.6" y="58.4" width="12.2" height="13" fill="#f2efe4" stroke="#b0a88e" stroke-width=".9"/><path d="M208.6 60.4V66.6M207.4 61.6H208.6M208.6 64.8H209.8M215 60V66M215 61.2H216.2M213.8 64H215" stroke="#4a4a4a" stroke-width=".9"/>
<path d="M217.6 70.6L222.4 74.8" stroke="#c8980c" stroke-width="2.6" stroke-linecap="round"/><path d="M217.8 70.2L222.4 74.2" stroke="#f0cc50" stroke-width=".8" stroke-linecap="round"/>
<circle cx="213.6" cy="67" r="5" fill="#dcebfb" fill-opacity=".82" stroke="#5e8edc" stroke-width="1.3"/><path d="M212.4 64.6V68.6H214.6V64.6" stroke="#b4c8e0" stroke-width="1.1" fill="#c8d8ea"/>
<path d="M230.5 56V76" stroke="#9a9a9a" stroke-width="1" shape-rendering="crispEdges"/><path d="M231.5 56V76" stroke="#f4f4f4" stroke-width="1" shape-rendering="crispEdges"/>
<path d="M241.8 58.8H247.6L251 62.2V70Q251 71 250 71H241.8Q240.8 71 240.8 70V59.8Q240.8 58.8 241.8 58.8Z" fill="#fff" stroke="#5a5a5a" stroke-width="1"/><path d="M247.6 58.8V62.2H251" fill="#e8e8e8" stroke="#5a5a5a" stroke-width=".8"/><path d="M242.6 61H245M242.6 64H248.6M242.6 66.2H247.6M242.6 68.4H245" stroke="#6a6a6a" stroke-width="1"/>
<path d="M248.5 64.80000000000001H251.89999999999998V68.2H255.29999999999998V71.60000000000001H251.89999999999998V75.0H248.5V71.60000000000001H245.1V68.2H248.5Z" fill="#2ccc2c" stroke="#0e8c0e" stroke-width="1" stroke-linejoin="round"/><path d="M249.7 65.80000000000001V73.6M246.1 69.4H253.89999999999998" stroke="#9cf89c" stroke-width="1.3"/>
<path d="M340.2 67.6L348.2 59.2L355.8 66.2L349.4 72.6Z" fill="url(#gy)" stroke="#b87a0a" stroke-width=".9"/><path d="M340.2 67.6L349.4 72.6L355.8 66.2L355.6 68.4L349.6 74.2L340.6 69.6Z" fill="#a86a08"/>
<path d="M369.8 64.6Q370 72.6 376 73.4Q381 72.6 381.4 64.6Z" fill="#ffd84a" stroke="#d4a010" stroke-width=".8"/>
<ellipse cx="375.4" cy="63.2" rx="7.8" ry="2.6" fill="#5b9ad8" stroke="#3a78b8" stroke-width=".8"/><path d="M371.4 62.6Q371.6 58.2 375.4 58.2Q379.4 58.2 379.6 62.6Z" fill="#7ab4e8" stroke="#3a78b8" stroke-width=".8"/>
<circle cx="380" cy="69.8" r="3.9" fill="#e01a10" stroke="#a00a04" stroke-width=".7"/><rect x="378.3" y="68.1" width="3.4" height="3.4" fill="#fff"/>
<path d="M450.5 54V78" stroke="#9a9a9a" stroke-width="1" shape-rendering="crispEdges"/><path d="M451.5 54V78" stroke="#f4f4f4" stroke-width="1" shape-rendering="crispEdges"/>
<path d="M454 56.5h3M454 58.5h3M454 60.5h3M454 62.5h3M454 64.5h3M454 66.5h3M454 68.5h3M454 70.5h3M454 72.5h3M454 74.5h3" stroke="#9c9c9c" stroke-width="1" shape-rendering="crispEdges"/>
<path d="M468.6 60.2V73.6M466.0 71.8H479.40000000000003" stroke="#505050" stroke-width="1.15" fill="none"/><path d="M466.90000000000003 61.800000000000004L468.6 59.6L470.3 61.800000000000004ZM477.8 70.2L480.1 71.8L477.8 73.39999999999999Z" fill="#505050"/>
<path d="M475.5 61.5V69.2M475.5 62.2H478.2M472.9 68.4H475.5" stroke="#1e9e2e" stroke-width="1.4" fill="none"/>
<rect x="488" y="54" width="25" height="22" fill="url(#hat)"/><path d="M488.5 76V54.5H513" stroke="#a2a2a2" stroke-width="1" fill="none" shape-rendering="crispEdges"/><path d="M512.5 55V75.5H489" stroke="#fff" stroke-width="1" fill="none" shape-rendering="crispEdges"/>
<path d="M496 60.2V73.6M493.4 71.8H506.8" stroke="#505050" stroke-width="1.15" fill="none"/><path d="M494.3 61.800000000000004L496 59.6L497.7 61.800000000000004ZM505.2 70.2L507.5 71.8L505.2 73.39999999999999Z" fill="#505050"/>
<path d="M502.4 57.8V70" stroke="#0f8a20" stroke-width="1.2"/><rect x="500.1" y="60.4" width="4.6" height="7.4" fill="#22c43a" stroke="#0f8a20" stroke-width=".9"/>
<path d="M524.4 60.2V73.6M521.8 71.8H535.2" stroke="#505050" stroke-width="1.15" fill="none"/><path d="M522.6999999999999 61.800000000000004L524.4 59.6L526.1 61.800000000000004ZM533.6 70.2L535.9 71.8L533.6 73.39999999999999Z" fill="#505050"/>
<path d="M524.8 68.8Q528.2 61.2 531 62.4Q533.6 63.6 535.6 67.2" stroke="#1e9e2e" stroke-width="1.3" fill="none"/>
<path d="M545.5 56V76" stroke="#9a9a9a" stroke-width="1" shape-rendering="crispEdges"/><path d="M546.5 56V76" stroke="#f4f4f4" stroke-width="1" shape-rendering="crispEdges"/>
<path d="M564.2 67.6L569.4000000000001 72.8" stroke="#d8a420" stroke-width="2.6" stroke-linecap="round"/>
<circle cx="560.2" cy="63.7" r="5.2" fill="url(#gl)" stroke="#2a72d0" stroke-width="1.4"/>
<path d="M557.2 63.7H563.2M560.2 60.7V66.7" stroke="#1a5cc0" stroke-width="1.6"/>
<path d="M592.2 67.6L597.4000000000001 72.8" stroke="#d8a420" stroke-width="2.6" stroke-linecap="round"/>
<circle cx="588.2" cy="63.7" r="5.2" fill="url(#gl)" stroke="#2a72d0" stroke-width="1.4"/>
<path d="M585.2 63.7H591.2" stroke="#1a5cc0" stroke-width="1.6"/>
<path d="M607.5 56V76" stroke="#9a9a9a" stroke-width="1" shape-rendering="crispEdges"/><path d="M608.5 56V76" stroke="#f4f4f4" stroke-width="1" shape-rendering="crispEdges"/>
<rect x="612" y="54" width="25" height="22" fill="url(#hat)"/><path d="M612.5 76V54.5H637" stroke="#a2a2a2" stroke-width="1" fill="none" shape-rendering="crispEdges"/><path d="M636.5 55V75.5H613" stroke="#fff" stroke-width="1" fill="none" shape-rendering="crispEdges"/>
<path d="M620 60.2V73.6M617.4 71.8H630.8000000000001" stroke="#505050" stroke-width="1.15" fill="none"/><path d="M618.3 61.800000000000004L620 59.6L621.7 61.800000000000004ZM629.2 70.2L631.5 71.8L629.2 73.39999999999999Z" fill="#505050"/>
<path d="M625 62.2L629.6 65.6L625 69Z" fill="#fff" stroke="#1ea02e" stroke-width="1.2"/>
<rect x="640" y="54" width="25" height="22" fill="url(#hat)"/><path d="M640.5 76V54.5H665" stroke="#a2a2a2" stroke-width="1" fill="none" shape-rendering="crispEdges"/><path d="M664.5 55V75.5H641" stroke="#fff" stroke-width="1" fill="none" shape-rendering="crispEdges"/>
<path d="M648.3 60.2V73.6M645.6999999999999 71.8H659.1" stroke="#505050" stroke-width="1.15" fill="none"/><path d="M646.5999999999999 61.800000000000004L648.3 59.6L650.0 61.800000000000004ZM657.5 70.2L659.8 71.8L657.5 73.39999999999999Z" fill="#505050"/>
<path d="M654.5 60V70" stroke="#1a62c8" stroke-width="1.3"/><path d="M656 65.2H660.4M658.4 62.8L656 65.2L658.4 67.6" stroke="#d03010" stroke-width="1.2" fill="none"/>
<path d="M669.5 56V76" stroke="#9a9a9a" stroke-width="1" shape-rendering="crispEdges"/><path d="M670.5 56V76" stroke="#f4f4f4" stroke-width="1" shape-rendering="crispEdges"/>
<path d="M680.8 58.8H687.4L690.6 62V70.2Q690.6 71.2 689.6 71.2H680.8Q679.8 71.2 679.8 70.2V59.8Q679.8 58.8 680.8 58.8Z" fill="#fff" stroke="#5a5a5a" stroke-width="1"/><path d="M687.4 58.8V62H690.6" fill="#e8e8e8" stroke="#5a5a5a" stroke-width=".8"/><path d="M684.6 61.4Q682.6 61.2 682.8 63.4V68.4M681.6 64.8H684.2" stroke="#555" stroke-width=".9" fill="none"/>
<path d="M687.1999999999999 64.7H690.6V68.1H694.0V71.5H690.6V74.89999999999999H687.1999999999999V71.5H683.8V68.1H687.1999999999999Z" fill="#2ccc2c" stroke="#0e8c0e" stroke-width="1" stroke-linejoin="round"/><path d="M688.4 65.7V73.49999999999999M684.8 69.3H692.6" stroke="#9cf89c" stroke-width="1.3"/>
<path d="M697 65.2H702L699.5 68.2Z" fill="#000"/>
<circle cx="721" cy="65.9" r="6.9" fill="#fff" stroke="#1c6ae0" stroke-width="2.2"/><circle cx="721" cy="65.9" r="7.9" fill="none" stroke="#0f4cb0" stroke-width=".5"/>
<path d="M721 61.6V66.2H724.2" stroke="#333" stroke-width="1.1" fill="none"/><path d="M721 60.4v.9M721 70.6v.9M715.6 65.9h.9M725.6 65.9h.9" stroke="#8aa8d8" stroke-width=".9"/>
<path d="M732.2 65.2H737.2L734.7 68.2Z" fill="#000"/>
<rect x="748.5" y="59.5" width="15" height="12.6" fill="#fff" stroke="#2f6cc4" stroke-width="1.2"/><rect x="749" y="60" width="14" height="2" fill="#4a86e0"/><path d="M749 66.4H763" stroke="#2f6cc4" stroke-width="1"/>
<path d="M750.6 65L753.4 63.6L755.4 64.4L757.8 63L760 63.8L762 62.8" stroke="#8a1a0a" stroke-width="1.1" fill="none"/><path d="M750.6 70.4L753 69.2L755 70L757.6 68L759.6 70L762 69" stroke="#1a8a2a" stroke-width="1.1" fill="none"/>
<path d="M767 65.2H772L769.5 68.2Z" fill="#000"/>
<path d="M778.5 54V78" stroke="#9a9a9a" stroke-width="1" shape-rendering="crispEdges"/><path d="M779.5 54V78" stroke="#f4f4f4" stroke-width="1" shape-rendering="crispEdges"/>
<rect x="1069.5" y="55.5" width="202" height="20" fill="url(#gs)" stroke="#c2c2c2" stroke-width="1"/>
<rect x="1090" y="56" width="120" height="19" fill="#fff"/><path d="M1090 56.5H1210" stroke="#b8b8b8" stroke-width="1"/>
<path d="M1089.5 56V75M1210.5 56V75M1224.5 56V75M1244.5 56V75" stroke="#cfcfcf" stroke-width="1" shape-rendering="crispEdges"/>
<path d="M1085.8 65.3L1085.4 67.0L1083.5 67.1L1082.7 68.2L1083.4 70.1L1081.9 71.1L1080.5 69.7L1079.1 70.0L1078.3 71.8L1076.6 71.4L1076.5 69.5L1075.4 68.7L1073.5 69.4L1072.5 67.9L1073.9 66.5L1073.6 65.1L1071.8 64.3L1072.2 62.6L1074.1 62.5L1074.9 61.4L1074.2 59.5L1075.7 58.5L1077.1 59.9L1078.5 59.6L1079.3 57.8L1081.0 58.2L1081.1 60.1L1082.2 60.9L1084.1 60.2L1085.1 61.7L1083.7 63.1L1084.0 64.5Z" fill="#2a66e4" stroke="#1848b8" stroke-width=".6"/><circle cx="1078.8" cy="64.8" r="2.3" fill="#e8e8e8" stroke="#1848b8" stroke-width=".6"/>
<path d="M1215.4 63.8H1220.4L1217.9 66.8Z" fill="#000"/>
<path d="M1234.4 64.6L1229.4 69.8" stroke="#2a6ee0" stroke-width="2.2" stroke-linecap="round"/><circle cx="1237" cy="62" r="3.7" fill="#eef5ff" stroke="#2a6ee0" stroke-width="1.5"/>
<path d="M1251 59.6H1265V70.6H1257L1254.6 74.2L1254.2 70.6H1251Z" fill="#5b7dbd"/>
<text x="1258" y="69" font-family="'Liberation Sans',sans-serif" font-weight="bold" font-size="10.5" fill="#fff" text-anchor="middle">4</text>
<path d="M7 83.5h3M7 85.5h3M7 87.5h3M7 89.5h3M7 91.5h3M7 93.5h3M7 95.5h3M7 97.5h3M7 99.5h3M7 101.5h3" stroke="#9c9c9c" stroke-width="1" shape-rendering="crispEdges"/>
<rect x="13" y="81" width="25" height="22" fill="url(#hat)"/><path d="M13.5 103V81.5H38" stroke="#a2a2a2" stroke-width="1" fill="none" shape-rendering="crispEdges"/><path d="M37.5 82V102.5H14" stroke="#fff" stroke-width="1" fill="none" shape-rendering="crispEdges"/>
<path d="M21.2 85.8V97.6L24 95L26.2 100L28 99.2L25.8 94.4L29.4 94.2Z" fill="#454545"/>
<path d="M53.5 86V91.6M53.5 95.2V101M46 93.4H51.6M55.4 93.4H61" stroke="#4a4a4a" stroke-width="1.3"/><rect x="53" y="93" width="1" height="1" fill="#4a4a4a"/>
<path d="M70.5 83V103" stroke="#9a9a9a" stroke-width="1" shape-rendering="crispEdges"/><path d="M71.5 83V103" stroke="#f4f4f4" stroke-width="1" shape-rendering="crispEdges"/>
<path d="M87.5 86.8V100M110 93.5H122M138.2 99.8L149.8 87.8" stroke="#505050" stroke-width="1.4"/>
<path d="M164.2 95.6L175 86.8M166 98.2L177.4 89M167.6 100.6L178.4 91.8" stroke="#555" stroke-width="1"/><path d="M168.4 90.6L169.4 98.6M171.4 88.4L172.6 96.4M174.6 86L175.8 94" stroke="#555" stroke-width="1"/>
<text x="175" y="102.4" font-family="'Liberation Sans',sans-serif" font-size="6.4" font-weight="bold" fill="#444">E</text>
<path d="M193 86.5H206M193 89.5H206M193 93.5H206M193 97.5H201" stroke="#555" stroke-width="1" stroke-dasharray="1 1" shape-rendering="crispEdges"/>
<text x="203" y="102.4" font-family="'Liberation Sans',sans-serif" font-size="6.4" font-weight="bold" fill="#444">F</text>
<text x="227.8" y="97.9" font-family="'Liberation Sans',sans-serif" font-size="12.4" font-weight="bold" fill="#666" text-anchor="middle">A</text>
<rect x="250" y="87" width="11.6" height="12.6" fill="none" stroke="#555" stroke-width="1" stroke-dasharray="1 1" shape-rendering="crispEdges"/><rect x="249.4" y="86.4" width="1.6" height="1.6" fill="#444"/>
<path d="M252.6 89.8H259M255.8 89.8V97.8" stroke="#666" stroke-width="1.7"/>
<path d="M280.6 87.2L284.4 91H276.8ZM276.8 91L280.6 93.4L284.4 91" fill="#444"/><path d="M288 99.8L284.2 96H291.8ZM284.2 96L288 93.8L291.8 96" fill="#444"/><path d="M280.6 94.6L282.8 96.8L288.4 90.2" stroke="#444" stroke-width="1.3" fill="none"/>
<path d="M294.2 92H299.2L296.7 95Z" fill="#000"/>
<path d="M305.5 81V105" stroke="#9a9a9a" stroke-width="1" shape-rendering="crispEdges"/><path d="M306.5 81V105" stroke="#f4f4f4" stroke-width="1" shape-rendering="crispEdges"/>
<path d="M309 83.5h3M309 85.5h3M309 87.5h3M309 89.5h3M309 91.5h3M309 93.5h3M309 95.5h3M309 97.5h3M309 99.5h3M309 101.5h3" stroke="#9c9c9c" stroke-width="1" shape-rendering="crispEdges"/>
<rect x="483" y="81" width="25" height="22" fill="url(#hat)"/><path d="M483.5 103V81.5H508" stroke="#a2a2a2" stroke-width="1" fill="none" shape-rendering="crispEdges"/><path d="M507.5 82V102.5H484" stroke="#fff" stroke-width="1" fill="none" shape-rendering="crispEdges"/>
<path d="M566.5 81V105" stroke="#9a9a9a" stroke-width="1" shape-rendering="crispEdges"/><path d="M567.5 81V105" stroke="#f4f4f4" stroke-width="1" shape-rendering="crispEdges"/>
<rect x="1118" y="713" width="2" height="9" fill="#5c8a0a" shape-rendering="crispEdges"/><rect x="1118" y="723" width="2" height="2" fill="#a40000" shape-rendering="crispEdges"/>
<rect x="1121" y="713" width="2" height="8" fill="#5c8a0a" shape-rendering="crispEdges"/><rect x="1121" y="722" width="2" height="3" fill="#a40000" shape-rendering="crispEdges"/>
<rect x="1124" y="713" width="2" height="7" fill="#5c8a0a" shape-rendering="crispEdges"/><rect x="1124" y="721" width="2" height="4" fill="#a40000" shape-rendering="crispEdges"/>
<rect x="1127" y="713" width="2" height="6" fill="#5c8a0a" shape-rendering="crispEdges"/><rect x="1127" y="720" width="2" height="5" fill="#a40000" shape-rendering="crispEdges"/>
<rect x="1130" y="713" width="2" height="5" fill="#5c8a0a" shape-rendering="crispEdges"/><rect x="1130" y="719" width="2" height="6" fill="#a40000" shape-rendering="crispEdges"/>
<rect x="1133" y="713" width="2" height="4" fill="#5c8a0a" shape-rendering="crispEdges"/><rect x="1133" y="718" width="2" height="7" fill="#a40000" shape-rendering="crispEdges"/>
<rect x="1136" y="713" width="2" height="3" fill="#5c8a0a" shape-rendering="crispEdges"/><rect x="1136" y="717" width="2" height="8" fill="#a40000" shape-rendering="crispEdges"/>
<rect x="1139" y="713" width="2" height="2" fill="#5c8a0a" shape-rendering="crispEdges"/><rect x="1139" y="716" width="2" height="9" fill="#a40000" shape-rendering="crispEdges"/>
<path d="M1259 727.5L1273.5 713M1263 727.5L1273.5 717M1267 727.5L1273.5 721M1271 727.5L1273.5 725" stroke="#9c9c9c" stroke-width="1.3"/><path d="M1260.4 727.5L1273.5 714.4M1264.4 727.5L1273.5 718.4M1268.4 727.5L1273.5 722.4" stroke="#fff" stroke-width=".9"/>
</svg>
<svg width="1278" height="732" viewBox="0 0 1278 732" style="position:absolute;left:0;top:0" font-family="'Liberation Sans', sans-serif">
<text x="27.3" y="22" font-size="12.6" fill="#000" font-weight="bold" textLength="361.7" lengthAdjust="spacingAndGlyphs">565896: Panteon Client Terminal - Демо Счет - [GBPUSD,Daily]</text>
<text x="26.3" y="21" font-size="12.6" fill="#fff" font-weight="bold" textLength="361.7" lengthAdjust="spacingAndGlyphs">565896: Panteon Client Terminal - Демо Счет - [GBPUSD,Daily]</text>
<text x="31" y="45" font-size="11.2" fill="#000" stroke="#000" stroke-width=".2" textLength="28.6" lengthAdjust="spacingAndGlyphs">Файл</text>
<text x="75.7" y="45" font-size="11.2" fill="#000" stroke="#000" stroke-width=".2" textLength="18.3" lengthAdjust="spacingAndGlyphs">Вид</text>
<text x="110.5" y="45" font-size="11.2" fill="#000" stroke="#000" stroke-width=".2" textLength="41.5" lengthAdjust="spacingAndGlyphs">Вставка</text>
<text x="168.4" y="45" font-size="11.2" fill="#000" stroke="#000" stroke-width=".2" textLength="44.1" lengthAdjust="spacingAndGlyphs">Графики</text>
<text x="228.6" y="45" font-size="11.2" fill="#000" stroke="#000" stroke-width=".2" textLength="36.4" lengthAdjust="spacingAndGlyphs">Сервис</text>
<text x="281.5" y="45" font-size="11.2" fill="#000" stroke="#000" stroke-width=".2" textLength="25.8" lengthAdjust="spacingAndGlyphs">Окно</text>
<text x="323.5" y="45" font-size="11.2" fill="#000" stroke="#000" stroke-width=".2" textLength="42.9" lengthAdjust="spacingAndGlyphs">Справка</text>
<text x="260.7" y="69.7" font-size="11.2" fill="#000" stroke="#000" stroke-width=".2" textLength="68.0" lengthAdjust="spacingAndGlyphs">Новый Ордер</text>
<text x="389.8" y="69.7" font-size="11.2" fill="#000" stroke="#000" stroke-width=".2" textLength="54.5" lengthAdjust="spacingAndGlyphs">Советники</text>
<text x="320" y="96.5" font-size="9.4" fill="#545454" stroke="#545454" stroke-width=".2" textLength="13" lengthAdjust="spacingAndGlyphs">M1</text>
<text x="348.5" y="96.5" font-size="9.4" fill="#545454" stroke="#545454" stroke-width=".2" textLength="12.5" lengthAdjust="spacingAndGlyphs">M5</text>
<text x="374" y="96.5" font-size="9.4" fill="#545454" stroke="#545454" stroke-width=".2" textLength="17.5" lengthAdjust="spacingAndGlyphs">M15</text>
<text x="401.5" y="96.5" font-size="9.4" fill="#545454" stroke="#545454" stroke-width=".2" textLength="18.5" lengthAdjust="spacingAndGlyphs">M30</text>
<text x="433" y="96.5" font-size="9.4" fill="#545454" stroke="#545454" stroke-width=".2" textLength="11.5" lengthAdjust="spacingAndGlyphs">H1</text>
<text x="460" y="96.5" font-size="9.4" fill="#545454" stroke="#545454" stroke-width=".2" textLength="12" lengthAdjust="spacingAndGlyphs">H4</text>
<text x="489" y="96.5" font-size="9.4" fill="#545454" stroke="#545454" stroke-width=".2" textLength="11.5" lengthAdjust="spacingAndGlyphs">D1</text>
<text x="516" y="96.5" font-size="9.4" fill="#545454" stroke="#545454" stroke-width=".2" textLength="14" lengthAdjust="spacingAndGlyphs">W1</text>
<text x="542.5" y="96.5" font-size="9.4" fill="#545454" stroke="#545454" stroke-width=".2" textLength="15.0" lengthAdjust="spacingAndGlyphs">MN</text>
<text x="18.4" y="700.2" font-size="11" fill="#7f7d70" stroke="#7f7d70" stroke-width=".2" textLength="56.6" lengthAdjust="spacingAndGlyphs">EURUSD,H4</text>
<text x="97.7" y="700.2" font-size="11" fill="#7f7d70" stroke="#7f7d70" stroke-width=".2" textLength="62.3" lengthAdjust="spacingAndGlyphs">GBPJPY,Daily</text>
<text x="182.7" y="700.2" font-size="11" fill="#7f7d70" stroke="#7f7d70" stroke-width=".2" textLength="57.3" lengthAdjust="spacingAndGlyphs">AUDUSD,H4</text>
<text x="350.7" y="700.2" font-size="11" fill="#7f7d70" stroke="#7f7d70" stroke-width=".2" textLength="53.3" lengthAdjust="spacingAndGlyphs">USDJPY,H4</text>
<text x="426" y="700.2" font-size="11" fill="#7f7d70" stroke="#7f7d70" stroke-width=".2" textLength="53.3" lengthAdjust="spacingAndGlyphs">EURJPY,H4</text>
<text x="502.7" y="700.2" font-size="11" fill="#7f7d70" stroke="#7f7d70" stroke-width=".2" textLength="56.0" lengthAdjust="spacingAndGlyphs">NZDUSD,H4</text>
<text x="582.7" y="700.2" font-size="11" fill="#7f7d70" stroke="#7f7d70" stroke-width=".2" textLength="65.0" lengthAdjust="spacingAndGlyphs">GBPCHF,Daily</text>
<text x="671" y="700.2" font-size="11" fill="#7f7d70" stroke="#7f7d70" stroke-width=".2" textLength="56" lengthAdjust="spacingAndGlyphs">XAUUSD,H4</text>
<text x="751" y="700.2" font-size="11" fill="#7f7d70" stroke="#7f7d70" stroke-width=".2" textLength="56.7" lengthAdjust="spacingAndGlyphs">USDCAD,H4</text>
<text x="830.3" y="700.2" font-size="11" fill="#7f7d70" stroke="#7f7d70" stroke-width=".2" textLength="65.0" lengthAdjust="spacingAndGlyphs">EURGBP,Daily</text>
<text x="917.7" y="700.2" font-size="11" fill="#7f7d70" stroke="#7f7d70" stroke-width=".2" textLength="66.0" lengthAdjust="spacingAndGlyphs">USDCHF,Daily</text>
<text x="1006.3" y="700.2" font-size="11" fill="#7f7d70" stroke="#7f7d70" stroke-width=".2" textLength="56.4" lengthAdjust="spacingAndGlyphs">EURCHF,H4</text>
<text x="1087" y="700.2" font-size="11" fill="#7f7d70" stroke="#7f7d70" stroke-width=".2" textLength="57.3" lengthAdjust="spacingAndGlyphs">AUDNZD,H4</text>
<text x="263.3" y="700.2" font-size="11" fill="#000" stroke="#000" stroke-width=".2" textLength="65.0" lengthAdjust="spacingAndGlyphs">GBPUSD,Daily</text>
<text x="6.2" y="723.2" font-size="11" fill="#000" stroke="#000" stroke-width=".2" textLength="128.0" lengthAdjust="spacingAndGlyphs">Для справки, нажмите F1</text>
<text x="667.7" y="723.2" font-size="11" fill="#000" stroke="#000" stroke-width=".2" textLength="86.6" lengthAdjust="spacingAndGlyphs">2014.01.03 00:00</text>
<text x="768.7" y="723.2" font-size="11" fill="#000" stroke="#000" stroke-width=".2" textLength="54.0" lengthAdjust="spacingAndGlyphs">O: 1.64497</text>
<text x="840.3" y="723.2" font-size="11" fill="#000" stroke="#000" stroke-width=".2" textLength="53.4" lengthAdjust="spacingAndGlyphs">H: 1.64737</text>
<text x="911.3" y="723.2" font-size="11" fill="#000" stroke="#000" stroke-width=".2" textLength="50.7" lengthAdjust="spacingAndGlyphs">L: 1.63951</text>
<text x="980.3" y="723.2" font-size="11" fill="#000" stroke="#000" stroke-width=".2" textLength="53.4" lengthAdjust="spacingAndGlyphs">C: 1.64170</text>
<text x="1051.3" y="723.2" font-size="11" fill="#000" stroke="#000" stroke-width=".2" textLength="42.4" lengthAdjust="spacingAndGlyphs">V: 49030</text>
<text x="1171.7" y="723.2" font-size="11" fill="#000" stroke="#000" stroke-width=".2" textLength="35.3" lengthAdjust="spacingAndGlyphs">57/1 kb</text>
</svg>
</body></html>
